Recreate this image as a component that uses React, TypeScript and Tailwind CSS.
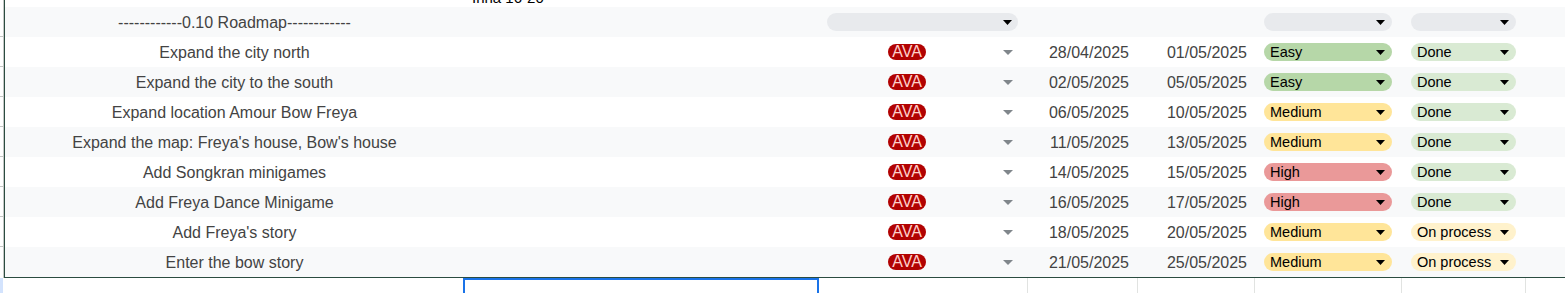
const rows = [
  { task: "Expand the city north", start: "28/04/2025", end: "01/05/2025", level: "Easy", status: "Done" },
  { task: "Expand the city to the south", start: "02/05/2025", end: "05/05/2025", level: "Easy", status: "Done" },
  { task: "Expand location Amour Bow Freya", start: "06/05/2025", end: "10/05/2025", level: "Medium", status: "Done" },
  { task: "Expand the map: Freya's house, Bow's house", start: "11/05/2025", end: "13/05/2025", level: "Medium", status: "Done" },
  { task: "Add Songkran minigames", start: "14/05/2025", end: "15/05/2025", level: "High", status: "Done" },
  { task: "Add Freya Dance Minigame", start: "16/05/2025", end: "17/05/2025", level: "High", status: "Done" },
  { task: "Add Freya's story", start: "18/05/2025", end: "20/05/2025", level: "Medium", status: "On process" },
  { task: "Enter the bow story", start: "21/05/2025", end: "25/05/2025", level: "Medium", status: "On process" },
];

const levelBg: Record<string, string> = {
  Easy: "bg-[#b6d7a8]",
  Medium: "bg-[#ffe599]",
  High: "bg-[#ea9999]",
};

const statusBg: Record<string, string> = {
  Done: "bg-[#d9ead3]",
  "On process": "bg-[#fff2cc]",
};

const Arrow = ({ color = "#000", w = 9 }: { color?: string; w?: number }) => (
  <svg width={w} height="5" viewBox={`0 0 ${w} 5`} className="shrink-0">
    <polygon points={`0,0 ${w},0 ${w / 2},5`} fill={color} />
  </svg>
);

const Chip = ({ label, bg }: { label?: string; bg: string }) => (
  <div className={`h-[18px] w-full rounded-full flex items-center justify-between pl-[6px] pr-[7px] ${bg}`}>
    <span className="text-[14.5px] leading-none text-black whitespace-nowrap pt-[1px]">{label}</span>
    <Arrow />
  </div>
);

const cols = "grid grid-cols-[459px_354px_209px_110px_117px_147px_124px_1fr]";

const App = () => {
  return (
    <div className="w-[1565px] h-[293px] overflow-hidden bg-white font-['Liberation_Sans',Arial,sans-serif] text-[16px] text-[#434343]">
      <div className="flex">
        {/* row header gutter */}
        <div className="w-[4px] border-r border-[#c4c7c5] flex flex-col">
          <div className="h-[7px]" />
          {Array.from({ length: 9 }).map((_, i) => (
            <div key={i} className={`h-[30px] ${i < 8 ? "border-b border-[#c4c7c5]" : ""}`} />
          ))}
        </div>

        <div className="flex-1 border-l border-b border-[#2b4c40]">
          <div className={`${cols} h-[7px] overflow-hidden`}>
            <div />
            <div className="pl-[8px] -mt-[10px] text-[15px] leading-[15px] text-black whitespace-nowrap">Inna 16-20</div>
          </div>

          {/* section header */}
          <div className={`${cols} h-[30px] bg-[#f8f9fa] items-center`}>
            <div className="text-center whitespace-nowrap pt-[2px]">------------0.10 Roadmap------------</div>
            <div />
            <div className="px-[9px]">
              <div className="h-[18px] rounded-full bg-[#e8eaed] flex items-center justify-end pr-[6px]">
                <Arrow />
              </div>
            </div>
            <div />
            <div />
            <div className="pl-[10px] pr-[9px]">
              <Chip bg="bg-[#e8eaed]" />
            </div>
            <div className="pl-[10px] pr-[9px]">
              <Chip bg="bg-[#e8eaed]" />
            </div>
            <div />
          </div>

          {rows.map((r, i) => (
            <div key={r.task} className={`${cols} h-[30px] items-center ${i % 2 === 0 ? "bg-white" : "bg-[#f8f9fa]"}`}>
              <div className="text-center whitespace-nowrap pt-[2px]">{r.task}</div>
              <div />
              <div className="flex items-center pr-[14px]">
                <div className="flex-1 flex justify-center">
                  <span className="h-[16px] px-[4px] rounded-full bg-[#b10202] text-[#ffcfc9] text-[16px] leading-[16px]">AVA</span>
                </div>
                <div className="ml-[7px]">
                  <Arrow color="#80868b" w={10} />
                </div>
              </div>
              <div className="text-right pr-[8px] pt-[2px]">{r.start}</div>
              <div className="text-right pr-[7px] pt-[2px]">{r.end}</div>
              <div className="pl-[10px] pr-[9px]">
                <Chip label={r.level} bg={levelBg[r.level]} />
              </div>
              <div className="pl-[10px] pr-[9px]">
                <Chip label={r.status} bg={statusBg[r.status]} />
              </div>
              <div />
            </div>
          ))}
        </div>
      </div>

      {/* empty row below, selected cell */}
      <div className="flex h-[15px]">
        <div className="w-[3px] bg-[#d3e3fd]" />
        <div className="w-[460px]" />
        <div className="w-[356px] border-t-2 border-x-2 border-[#1a73e8]" />
        <div className="w-[209px] border-r border-[#e1e3e1]" />
        <div className="w-[110px] border-r border-[#e1e3e1]" />
        <div className="w-[117px] border-r border-[#e1e3e1]" />
        <div className="w-[147px] border-r border-[#e1e3e1]" />
        <div className="w-[124px] border-r border-[#e1e3e1]" />
        <div className="flex-1" />
      </div>
    </div>
  );
};

export default App;
